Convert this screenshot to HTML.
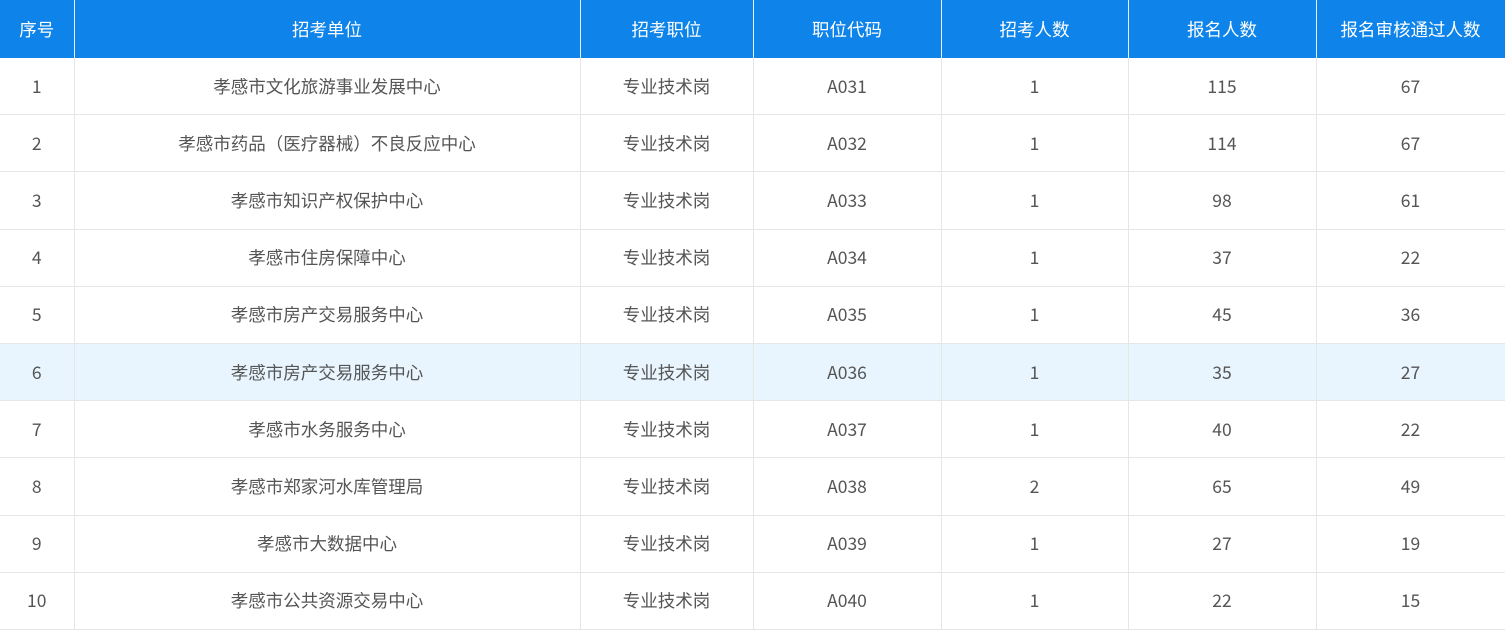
<!DOCTYPE html>
<html><head><meta charset="utf-8"><style>
html,body{margin:0;padding:0;background:#fff;width:1505px;height:630px;overflow:hidden}
table{border-collapse:collapse;table-layout:fixed;width:1505px;font-family:"Noto Sans CJK SC",sans-serif;font-size:17.5px}
th{background:#0e83e9;color:#fff;font-weight:normal;height:58px;border-right:1px solid #e8eef5;padding:0;text-align:center}
td{height:56.2px;border:1px solid #e6e6e6;border-top:none;color:#555;text-align:center;padding:0}
tr.hl td{background:#e8f5fe}
td:first-child{border-left:none}
</style></head><body>
<table>
<colgroup><col style="width:74px"><col style="width:506px"><col style="width:173px"><col style="width:188px"><col style="width:187px"><col style="width:188px"><col style="width:189px"></colgroup>
<tr><th>序号</th><th>招考单位</th><th>招考职位</th><th>职位代码</th><th>招考人数</th><th>报名人数</th><th>报名审核通过人数</th></tr>
<tr><td>1</td><td>孝感市文化旅游事业发展中心</td><td>专业技术岗</td><td>A031</td><td>1</td><td>115</td><td>67</td></tr>
<tr><td>2</td><td>孝感市药品（医疗器械）不良反应中心</td><td>专业技术岗</td><td>A032</td><td>1</td><td>114</td><td>67</td></tr>
<tr><td>3</td><td>孝感市知识产权保护中心</td><td>专业技术岗</td><td>A033</td><td>1</td><td>98</td><td>61</td></tr>
<tr><td>4</td><td>孝感市住房保障中心</td><td>专业技术岗</td><td>A034</td><td>1</td><td>37</td><td>22</td></tr>
<tr><td>5</td><td>孝感市房产交易服务中心</td><td>专业技术岗</td><td>A035</td><td>1</td><td>45</td><td>36</td></tr>
<tr class="hl"><td>6</td><td>孝感市房产交易服务中心</td><td>专业技术岗</td><td>A036</td><td>1</td><td>35</td><td>27</td></tr>
<tr><td>7</td><td>孝感市水务服务中心</td><td>专业技术岗</td><td>A037</td><td>1</td><td>40</td><td>22</td></tr>
<tr><td>8</td><td>孝感市郑家河水库管理局</td><td>专业技术岗</td><td>A038</td><td>2</td><td>65</td><td>49</td></tr>
<tr><td>9</td><td>孝感市大数据中心</td><td>专业技术岗</td><td>A039</td><td>1</td><td>27</td><td>19</td></tr>
<tr><td>10</td><td>孝感市公共资源交易中心</td><td>专业技术岗</td><td>A040</td><td>1</td><td>22</td><td>15</td></tr>
</table>
</body></html>
